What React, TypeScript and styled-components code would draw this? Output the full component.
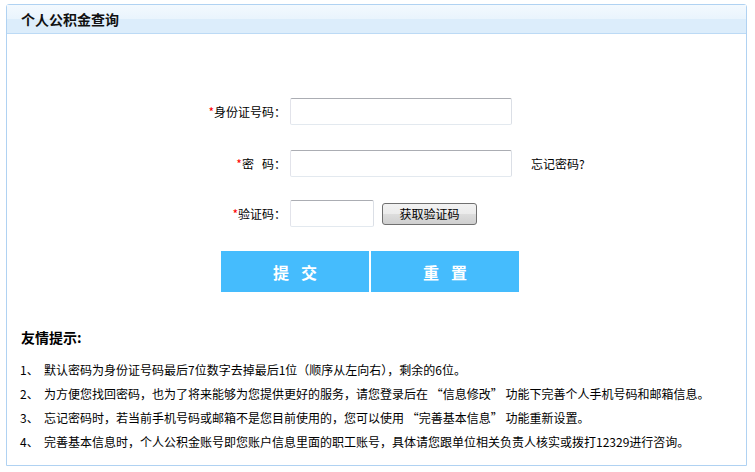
import React from "react";
import styled, { createGlobalStyle } from "styled-components";

const GlobalStyle = createGlobalStyle`
  html, body {
    margin: 0;
    padding: 0;
    background: #ffffff;
  }
  body {
    font-family: "Noto Sans CJK SC", "Liberation Sans", sans-serif;
    font-size: 12px;
    color: #000;
  }
`;

const Page = styled.div`
  padding: 4px 8px 6px 6px;
  width: 755px;
  box-sizing: border-box;
`;

const Panel = styled.div`
  border: 1px solid #b0d2f2;
  border-radius: 3px 3px 0 0;
  height: 462px;
  box-sizing: border-box;
  display: flex;
  flex-direction: column;
`;

const PanelHeader = styled.div`
  height: 29px;
  box-sizing: border-box;
  padding-left: 14px;
  display: flex;
  align-items: center;
  background: linear-gradient(#f3f9fe 0%, #e9f4fd 50%, #dcedfb 51%, #dcedfb 100%);
  border-bottom: 1px solid #bcdaf5;
  font-size: 14px;
  font-weight: bold;
  color: #111;
`;

const Form = styled.div`
  padding-top: 64px;
  display: flex;
  flex-direction: column;
`;

const Row = styled.div<{ $gap: number }>`
  display: grid;
  grid-template-columns: 279px auto auto;
  justify-content: start;
  align-items: center;
  column-gap: 4px;
  margin-bottom: ${(p) => p.$gap}px;
`;

const Label = styled.label`
  text-align: right;
  font-size: 12px;
  white-space: pre;
`;

const Star = styled.span`
  color: #ff0000;
`;

const Input = styled.input<{ $width: number }>`
  width: ${(p) => p.$width}px;
  height: 27px;
  box-sizing: border-box;
  border: 1px solid;
  border-color: #abadb3 #dbdfe6 #e3e9ef #e2e3ea;
  border-radius: 2px;
  padding: 0 4px;
  font-family: inherit;
  outline: none;
`;

const Aside = styled.span<{ $left: number }>`
  margin-left: ${(p) => p.$left}px;
  font-size: 12px;
`;

const CodeButton = styled.button`
  margin-left: 4px;
  width: 95px;
  height: 22px;
  border: 1px solid #707070;
  border-radius: 3px;
  background: linear-gradient(#f2f2f2 0%, #ebebeb 50%, #dddddd 51%, #cfcfcf 100%);
  font-family: inherit;
  font-size: 12px;
  color: #000;
  padding: 0;
`;

const Actions = styled.div`
  display: flex;
  gap: 2px;
  padding-left: 214px;
`;

const ActionButton = styled.button<{ $width: number }>`
  width: ${(p) => p.$width}px;
  height: 41px;
  border: none;
  background: #45bcfd;
  color: #fff;
  font-family: inherit;
  font-size: 16px;
  font-weight: bold;
  letter-spacing: 12px;
  text-indent: 12px;
  padding: 0;
`;

const Tips = styled.div`
  padding: 36px 0 0 14px;
`;

const TipsTitle = styled.div`
  font-size: 14px;
  font-weight: bold;
  height: 18px;
  line-height: 18px;
  margin-bottom: 12px;
`;

const TipList = styled.ol`
  list-style: none;
  margin: 0 0 0 -1px;
  padding: 0;
`;

const TipItem = styled.li`
  display: flex;
  height: 24px;
  line-height: 24px;
  font-size: 12px;
`;

const TipNum = styled.span`
  width: 24px;
  flex: none;
`;

const tips = [
  "默认密码为身份证号码最后7位数字去掉最后1位（顺序从左向右），剩余的6位。",
  "为方便您找回密码，也为了将来能够为您提供更好的服务，请您登录后在 “信息修改” 功能下完善个人手机号码和邮箱信息。",
  "忘记密码时，若当前手机号码或邮箱不是您目前使用的，您可以使用 “完善基本信息” 功能重新设置。",
  "完善基本信息时，个人公积金账号即您账户信息里面的职工账号，具体请您跟单位相关负责人核实或拨打12329进行咨询。",
];

export default function App() {
  return (
    <Page>
      <GlobalStyle />
      <Panel>
        <PanelHeader>个人公积金查询</PanelHeader>
        <Form>
          <Row $gap={25}>
            <Label>
              <Star>*</Star>身份证号码：
            </Label>
            <Input $width={222} type="text" />
          </Row>
          <Row $gap={23}>
            <Label>
              <Star>*</Star>密{"   "}码：
            </Label>
            <Input $width={222} type="password" />
            <Aside $left={15}>忘记密码?</Aside>
          </Row>
          <Row $gap={24}>
            <Label>
              <Star>*</Star>验证码：
            </Label>
            <Input $width={84} type="text" />
            <CodeButton type="button">获取验证码</CodeButton>
          </Row>
          <Actions>
            <ActionButton $width={148} type="button">提交</ActionButton>
            <ActionButton $width={148} type="button">重置</ActionButton>
          </Actions>
        </Form>
        <Tips>
          <TipsTitle>友情提示:</TipsTitle>
          <TipList>
            {tips.map((t, i) => (
              <TipItem key={i}>
                <TipNum>{i + 1}、</TipNum>
                <span>{t}</span>
              </TipItem>
            ))}
          </TipList>
        </Tips>
      </Panel>
    </Page>
  );
}
